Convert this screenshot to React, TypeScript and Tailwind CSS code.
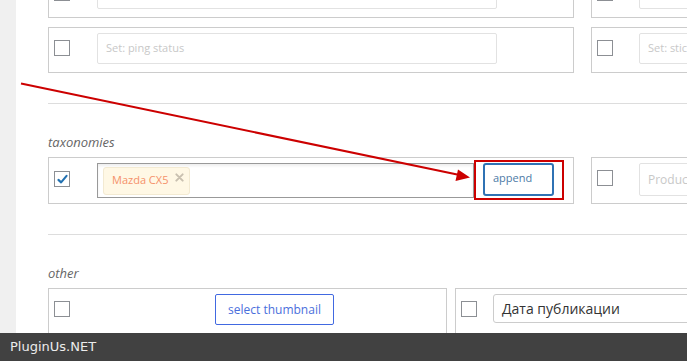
import React from 'react';

const font = { fontFamily: '"Open Sans", "Noto Sans", sans-serif' };

const Check = ({ checked = false }: { checked?: boolean }) => (
  <div className="w-4 h-4 shrink-0 border border-[#8c8f94] bg-white flex items-center justify-center">
    {checked && (
      <svg viewBox="0 0 16 16" className="w-[13px] h-[13px]">
        <path d="M3 8.5 L6.3 11.5 L13 3.5" fill="none" stroke="#2271b1" strokeWidth="2.6" strokeLinecap="round" strokeLinejoin="round" />
      </svg>
    )}
  </div>
);

const FieldRow = ({ placeholder, gap = 'ml-[27px]' }: { placeholder?: string; gap?: string }) => (
  <div className="w-[526px] h-[46px] shrink-0 border border-[#cccccc] px-[5px] pt-[5px] flex items-start">
    <div className="mt-[7px]">
      <Check />
    </div>
    <div className={`${gap} w-[400px] h-[31px] border border-[#e2e2e2] rounded-[2px] flex items-center px-[8px] text-[11px] text-[#c8c8c8] whitespace-nowrap overflow-hidden`}>
      {placeholder}
    </div>
  </div>
);

const Separator = () => <div className="h-px bg-[#dddddd] w-[1200px]" />;

const Label = ({ text }: { text: string }) => (
  <div className="mt-[29px] h-[18px] leading-[18px] text-[13px] italic text-[#666666]">{text}</div>
);

const App: React.FC = () => {
  return (
    <div className="relative w-[687px] h-[361px] overflow-hidden bg-white flex" style={font}>
      {/* left admin strip */}
      <div className="w-4 shrink-0 bg-[#f0f0f0]" />

      <div className="pl-8 flex flex-col mt-[-28px]">
        {/* bulk field rows */}
        <div className="flex gap-[17px]">
          <FieldRow />
          <FieldRow gap="ml-[26px]" />
        </div>
        <div className="flex gap-[17px] mt-[9px]">
          <FieldRow placeholder="Set: ping status" />
          <FieldRow placeholder="Set: sticky" gap="ml-[26px]" />
        </div>

        <div className="mt-[30px]">
          <Separator />
        </div>

        {/* taxonomies */}
        <Label text="taxonomies" />
        <div className="flex gap-[17px] mt-[6px]">
          <div className="w-[526px] h-[47px] shrink-0 border border-[#cccccc] px-[5px] pt-[5px] flex items-start">
            <div className="mt-[8px]">
              <Check checked />
            </div>
            <div className="ml-[27px] w-[377px] h-[35px] border border-[#999999] shadow-[inset_0_2px_3px_rgba(0,0,0,0.07)] flex items-center px-[5px]">
              <div className="h-[28px] flex items-center gap-[7px] pl-[8px] pr-[5px] bg-[#fff8e5] border border-[#f3ead2] rounded-[3px] text-[11px] text-[#f5916a]">
                <span>Mazda CX5</span>
                <svg viewBox="0 0 10 10" className="w-[9px] h-[9px] -mt-[6px]">
                  <path d="M1.5 1.5 L8.5 8.5 M8.5 1.5 L1.5 8.5" stroke="#c9c0b0" strokeWidth="2.2" strokeLinecap="round" />
                </svg>
              </div>
            </div>
            <div className="relative ml-[9px]">
              <button className="w-[71px] h-[33px] border-2 border-[#2f72b4] rounded-[3px] bg-white text-[11px] text-[#4d7aa6] text-left pl-[8px] pb-[2px]">
                append
              </button>
              {/* highlight frame */}
              <div className="absolute left-[-9px] top-[-3px] w-[90px] h-[40px] border-2 border-[#cc0000]" />
            </div>
          </div>
          <div className="w-[526px] h-[47px] shrink-0 border border-[#cccccc] px-[5px] pt-[5px] flex items-start">
            <div className="mt-[7px]">
              <Check />
            </div>
            <div className="ml-[26px] w-[300px] h-[33px] border border-[#e2e2e2] rounded-[2px] flex items-center px-[8px] text-[12px] text-[#c8c8c8]">
              Producer
            </div>
          </div>
        </div>

        <div className="mt-[30px]">
          <Separator />
        </div>

        {/* other */}
        <Label text="other" />
        <div className="flex gap-[8px] mt-[6px]">
          <div className="w-[399px] h-[60px] shrink-0 border border-[#cccccc] px-[5px] pt-[5px] flex items-start">
            <div className="mt-[7px]">
              <Check />
            </div>
            <button className="ml-[145px] w-[119px] h-[31px] border border-[#4169e1] rounded-[2px] bg-white text-[12px] text-[#4a6fdc]">
              select thumbnail
            </button>
          </div>
          <div className="w-[526px] h-[60px] shrink-0 border border-[#cccccc] px-[5px] pt-[5px] flex items-start">
            <div className="mt-[7px]">
              <Check />
            </div>
            <div className="ml-[16px] w-[400px] h-[29px] border border-[#cccccc] rounded-[3px] flex items-center px-[8px] text-[14px] text-[#333333]">
              Дата публикации
            </div>
          </div>
        </div>
      </div>

      {/* annotation arrow */}
      <svg className="absolute left-0 top-0 pointer-events-none" width="687" height="361">
        <line x1="21" y1="83.5" x2="462" y2="175.5" stroke="#cc0000" strokeWidth="2" />
        <path d="M470 177.5 L458 169.5 L455.5 181 Z" fill="#cc0000" />
      </svg>

      {/* footer watermark */}
      <div className="absolute left-0 right-0 bottom-0 h-[28px] bg-[#414141] flex items-center pl-[10px] text-[13px] text-[#ececec]" style={{ fontFamily: '"DejaVu Sans", sans-serif' }}>
        PluginUs.NET
      </div>
    </div>
  );
};

export default App;
